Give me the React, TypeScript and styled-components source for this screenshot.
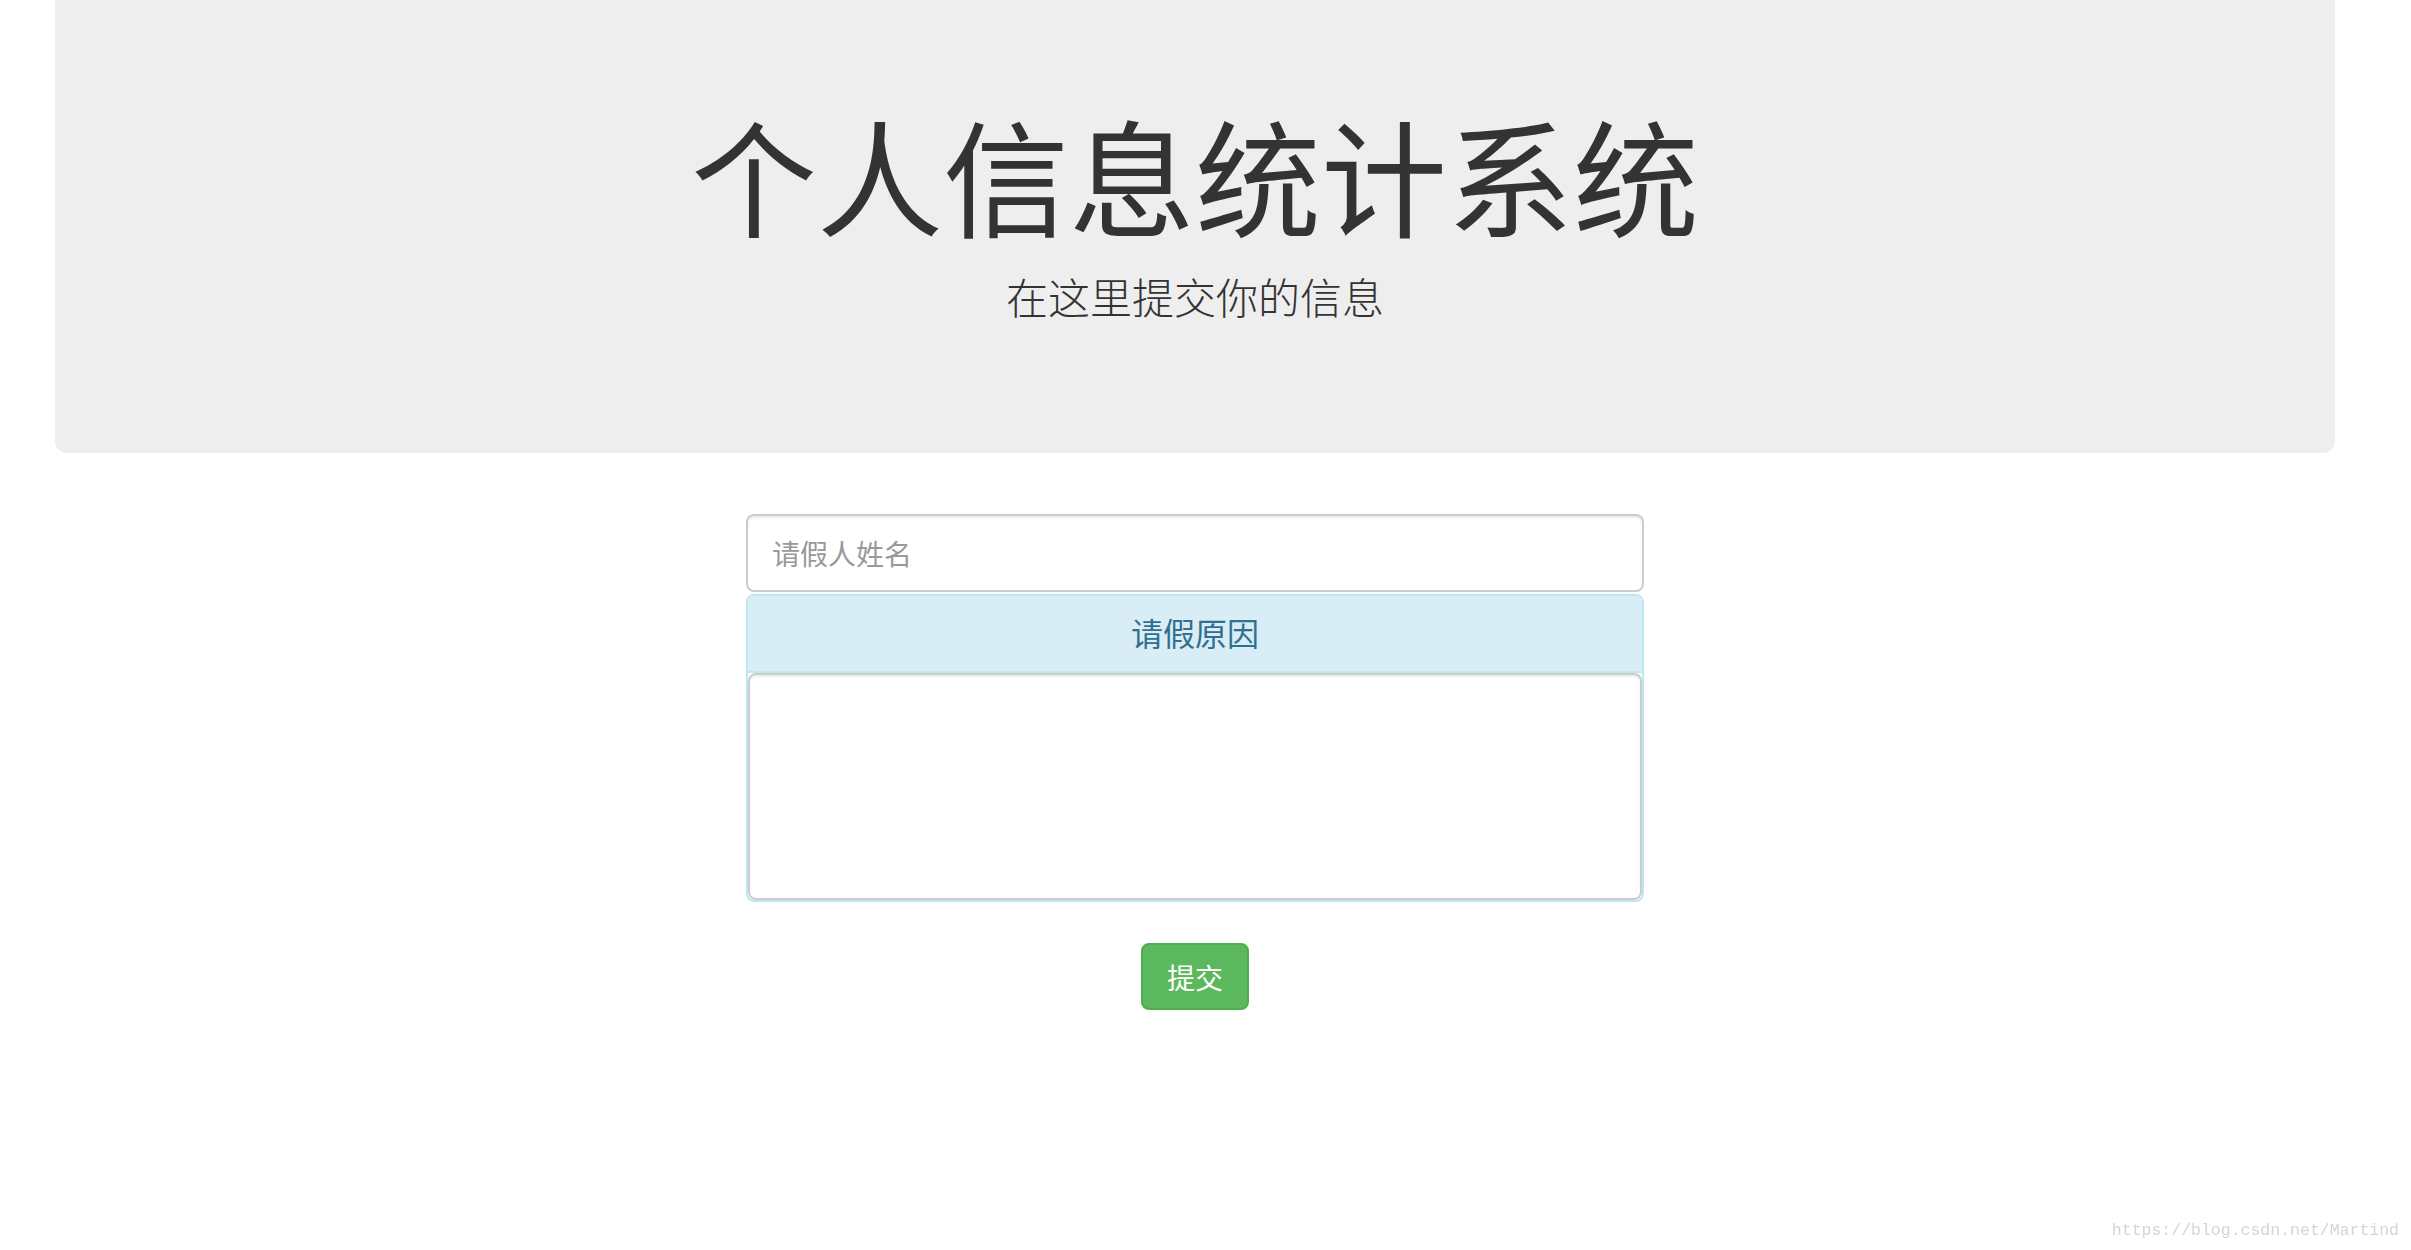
import React from "react";
import styled, { createGlobalStyle } from "styled-components";

const GlobalStyle = createGlobalStyle`
  html, body {
    margin: 0;
    padding: 0;
    background: #ffffff;
  }
  body {
    font-family: "Liberation Sans", "Noto Sans CJK SC", sans-serif;
    color: #333333;
  }
  * { box-sizing: border-box; }
`;

const Page = styled.div`
  width: 2390px;
  padding: 0 55px;
  min-height: 1250px;
`;

const Jumbotron = styled.header`
  height: 453px;
  background: #eeeeee;
  border-radius: 0 0 12px 12px;
  padding-top: 103px;
  text-align: center;
`;

const Title = styled.h1`
  margin: 0;
  font-family: "Noto Sans CJK SC", sans-serif;
  font-weight: 400;
  font-size: 126px;
  line-height: 140px;
  color: #333333;
`;

const Subtitle = styled.p`
  margin: 23px 0 0;
  font-family: "Noto Sans CJK SC", sans-serif;
  font-weight: 300;
  font-size: 42px;
  line-height: 60px;
  color: #333333;
`;

const Form = styled.form`
  width: 898px;
  margin: 61px auto 0;
  display: flex;
  flex-direction: column;
  align-items: stretch;
`;

const NameInput = styled.input`
  height: 78px;
  border: 2px solid #cccccc;
  border-radius: 8px;
  padding: 0 24px;
  font-family: "Noto Sans CJK SC", sans-serif;
  font-size: 28px;
  color: #555555;
  outline: none;
  box-shadow: inset 0 2px 2px rgba(0, 0, 0, 0.075);
  &::placeholder {
    color: #999999;
  }
`;

const Panel = styled.section`
  margin-top: 2px;
  border: 2px solid #bce8f1;
  border-radius: 8px;
  overflow: hidden;
  background: #ffffff;
`;

const PanelHeading = styled.div`
  height: 77px;
  background: #d9edf7;
  border-bottom: 2px solid #bce8f1;
  color: #31708f;
  font-family: "Noto Sans CJK SC", sans-serif;
  font-size: 32px;
  line-height: 72px;
  text-align: center;
`;

const Reason = styled.textarea`
  display: block;
  width: 100%;
  height: 227px;
  margin: 0;
  border: 2px solid #cccccc;
  border-radius: 8px;
  padding: 12px 24px;
  font-family: "Noto Sans CJK SC", sans-serif;
  font-size: 28px;
  resize: none;
  outline: none;
  box-shadow: inset 0 2px 2px rgba(0, 0, 0, 0.075);
`;

const ButtonRow = styled.div`
  display: flex;
  justify-content: center;
  margin-top: 41px;
`;

const SubmitButton = styled.button`
  width: 108px;
  height: 67px;
  padding: 0;
  background: #5cb85c;
  border: 2px solid #4cae4c;
  border-radius: 8px;
  color: #ffffff;
  font-family: "Noto Sans CJK SC", sans-serif;
  font-size: 28px;
  line-height: 1;
  cursor: pointer;
`;

const Watermark = styled.div`
  position: fixed;
  right: 12px;
  top: 1220px;
  font-family: "Liberation Mono", monospace;
  font-size: 16.5px;
  line-height: 22px;
  color: #d6d6cf;
  letter-spacing: 0;
`;

export default function App() {
  return (
    <>
      <GlobalStyle />
      <Page>
        <Jumbotron>
          <Title>个人信息统计系统</Title>
          <Subtitle>在这里提交你的信息</Subtitle>
        </Jumbotron>
        <Form onSubmit={(e) => e.preventDefault()}>
          <NameInput type="text" placeholder="请假人姓名" />
          <Panel>
            <PanelHeading>请假原因</PanelHeading>
            <Reason />
          </Panel>
          <ButtonRow>
            <SubmitButton type="submit">提交</SubmitButton>
          </ButtonRow>
        </Form>
      </Page>
      <Watermark>https://blog.csdn.net/Martind</Watermark>
    </>
  );
}
